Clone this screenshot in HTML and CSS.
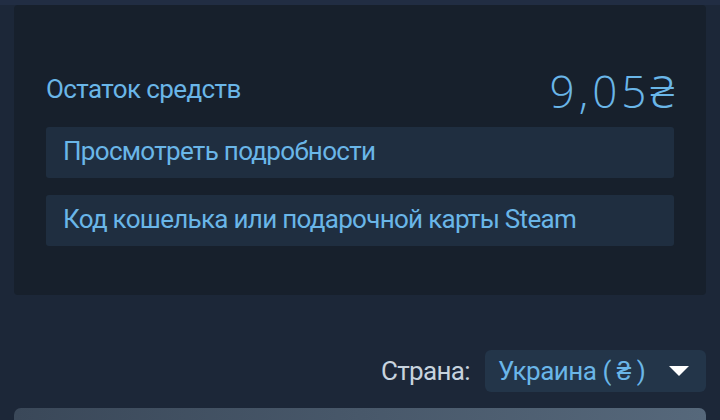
FILE: index.html
```html
<!DOCTYPE html>
<html lang="ru">
<head>
  <meta charset="UTF-8">
  <title>Кошелёк Steam</title>
  <link rel="stylesheet" href="styles.css">
</head>
<body>
  <div class="top-strip"></div>
  <div class="wallet">
    <div class="balance">
      <span class="balance-label">Остаток средств</span>
      <span class="balance-amount">9,05<span class="currency">₴</span></span>
    </div>
    <div class="wallet-links">
      <div class="wallet-link">Просмотреть подробности</div>
      <div class="wallet-link">Код кошелька или подарочной карты Steam</div>
    </div>
  </div>

  <div class="country">
    <span class="country-label">Страна:</span>
    <div class="country-select">
      <span>Украина ( ₴ )</span>
      <svg class="caret" width="22" height="12" viewBox="0 0 22 12">
        <path d="M1 1 L21 1 L11 11 Z" fill="#ffffff"/>
      </svg>
    </div>
  </div>

  <div class="bottom-bar"></div>
</body>
</html>
```

FILE: styles.css
```css
body {
  margin: 0;
  font-family: Roboto, "Liberation Sans", sans-serif;
  background: #1c2738;
  height: 420px;
  overflow: hidden;
}
.top-strip {
  height: 5px;
  background: #212d43;
}
.wallet {
  margin: 0 14px;
  height: 290px;
  box-sizing: border-box;
  padding: 60px 32px 0;
  background: #17202c;
  border-radius: 4px;
}
.balance {
  display: flex;
  justify-content: space-between;
  align-items: center;
  height: 50px;
  margin-bottom: 12px;
}
.balance-label {
  color: #6ab6e8;
  font-size: 26px;
  letter-spacing: -0.6px;
  padding-bottom: 3px;
}
.balance-amount {
  color: #6ab6e8;
  font-family: "Open Sans", Roboto, sans-serif;
  font-size: 44px;
  font-weight: 300;
  letter-spacing: 4px;
  padding-top: 2px;
}
.currency {
  font-family: "Noto Sans", "DejaVu Sans", sans-serif;
  font-weight: 300;
  letter-spacing: 0;
}
.wallet-links {
  display: flex;
  flex-direction: column;
  gap: 17px;
}
.wallet-link {
  height: 51px;
  box-sizing: border-box;
  padding: 0 0 3px 17px;
  display: flex;
  align-items: center;
  background: #1f2e40;
  border-radius: 3px;
  color: #6ab6e8;
  font-size: 26px;
  letter-spacing: -0.7px;
}
.country {
  display: flex;
  justify-content: flex-end;
  align-items: center;
  gap: 15px;
  margin: 55px 14px 0;
}
.country-label {
  color: #c7d3de;
  font-size: 26px;
  letter-spacing: -0.65px;
}
.country-select {
  display: flex;
  align-items: center;
  justify-content: space-between;
  width: 221px;
  height: 42px;
  box-sizing: border-box;
  padding: 0 16px 0 13px;
  background: #233549;
  border-radius: 6px;
  color: #6ab6e8;
  font-size: 26px;
  letter-spacing: -0.5px;
}
.bottom-bar {
  margin: 16px 14px 0;
  height: 30px;
  border-radius: 7px 7px 0 0;
  background: linear-gradient(90deg, #3a4859, #56687b);
}
```
